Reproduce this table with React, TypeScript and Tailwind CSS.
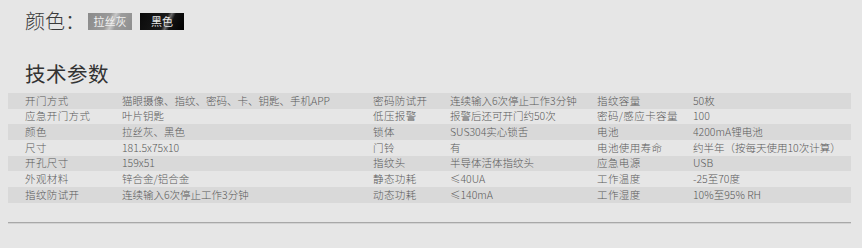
import React from "react";

const rows: string[][] = [
  ["开门方式", "猫眼摄像、指纹、密码、卡、钥匙、手机APP", "密码防试开", "连续输入6次停止工作3分钟", "指纹容量", "50枚"],
  ["应急开门方式", "叶片钥匙", "低压报警", "报警后还可开门约50次", "密码/感应卡容量", "100"],
  ["颜色", "拉丝灰、黑色", "锁体", "SUS304实心锁舌", "电池", "4200mA锂电池"],
  ["尺寸", "181.5x75x10", "门铃", "有", "电池使用寿命", "约半年（按每天使用10次计算）"],
  ["开孔尺寸", "159x51", "指纹头", "半导体活体指纹头", "应急电源", "USB"],
  ["外观材料", "锌合金/铝合金", "静态功耗", "≤40UA", "工作温度", "-25至70度"],
  ["指纹防试开", "连续输入6次停止工作3分钟", "动态功耗", "≤140mA", "工作湿度", "10%至95% RH"],
];

const App = () => {
  return (
    <div
      className="w-[862px] h-[248px] bg-[#e6e6e6] overflow-hidden"
      style={{ fontFamily: '"Noto Sans CJK SC", "Noto Sans", sans-serif' }}
    >
      {/* Colour options */}
      <div className="flex items-center pl-[25px] pt-[8px] h-[34px]">
        <span className="text-[20px] leading-none font-light text-[#3a3a3a]">颜色：</span>
        <div className="ml-[3px] flex gap-[8px]">
          <div className="w-[44px] h-[17px] flex items-center justify-center text-[11px] text-[#f0f0f0] bg-[linear-gradient(115deg,#8a8a8a_0%,#9a9a9a_45%,#c8c8c8_55%,#9c9c9c_65%,#8e8e8e_100%)]">
            拉丝灰
          </div>
          <div className="w-[44px] h-[17px] flex items-center justify-center text-[11px] text-[#e8e8e8] bg-[linear-gradient(115deg,#0a0a0a_0%,#1a1a1a_55%,#6a6a6a_62%,#111_70%,#000_100%)]">
            黑色
          </div>
        </div>
      </div>

      {/* Heading */}
      <h2 className="pl-[25px] pt-[26px] text-[20.5px] leading-[27px] tracking-[0.5px] text-[#333]">技术参数</h2>

      {/* Spec table */}
      <div className="mt-[6px] mx-[8px] w-[843px] text-[10.5px] font-light text-[#5a5a5a]">
        {rows.map((r, i) => (
          <div
            key={i}
            className={`grid grid-cols-[97px_251px_77px_147px_96px_1fr] pl-[17px] h-[15.7px] items-center leading-none whitespace-nowrap ${
              i % 2 === 0 ? "bg-[#d9d9d9]" : ""
            }`}
          >
            {r.map((c, j) => (
              <span key={j} className={j % 2 === 0 ? "tracking-[0.4px]" : ""}>
                {c}
              </span>
            ))}
          </div>
        ))}
      </div>

      {/* Divider */}
      <div className="mt-[19px] mx-[8px] w-[843px] border-t border-[#a8a8a8] border-b border-b-[#d2d2d2]" />
    </div>
  );
};

export default App;
